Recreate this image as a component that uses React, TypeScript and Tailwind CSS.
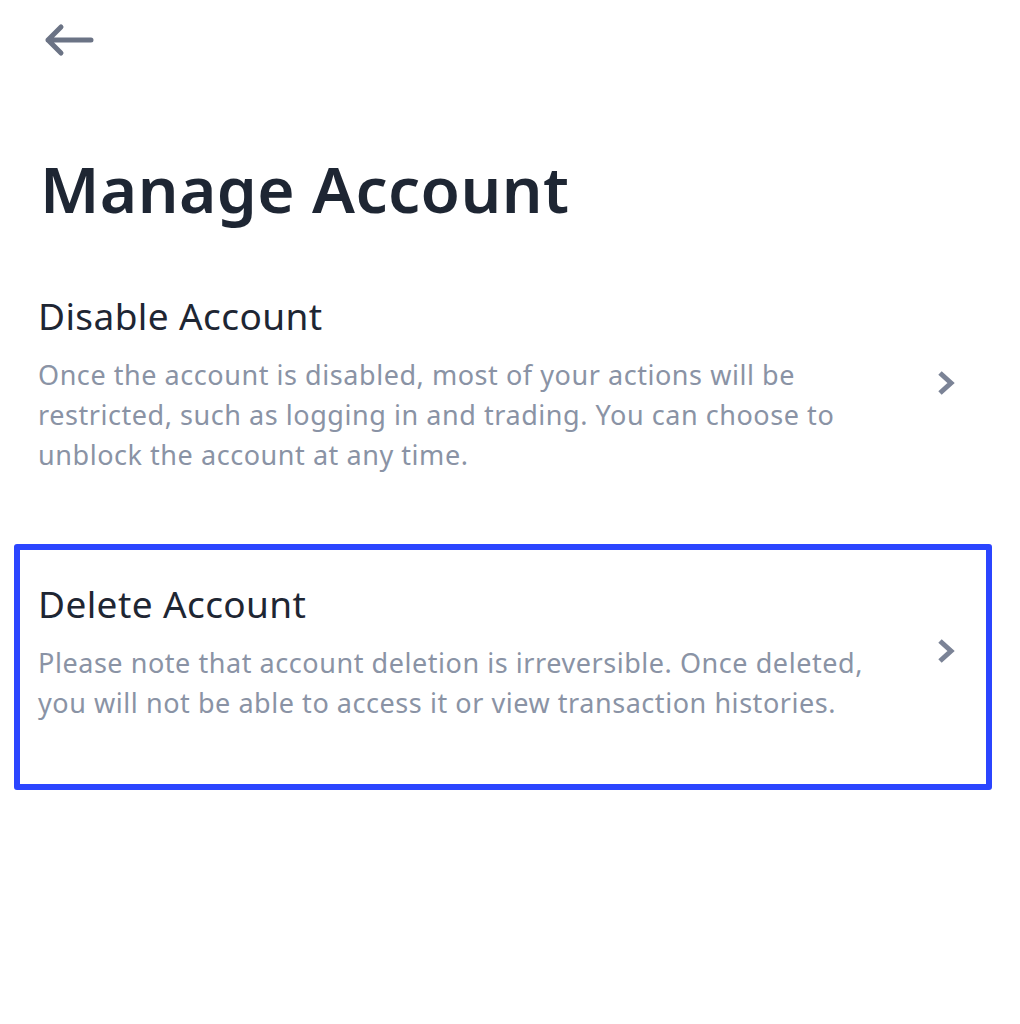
const FONT = "font-['Noto_Sans',sans-serif]";

function BackArrow() {
  return (
    <svg width="52" height="36" viewBox="0 0 52 36" fill="none" className="text-[#6b7385]">
      <path d="M5 18H48M18 5L5 18L18 31" stroke="currentColor" strokeWidth="5" strokeLinecap="round" strokeLinejoin="round" />
    </svg>
  );
}

function Chevron({ className = '' }: { className?: string }) {
  return (
    <svg width="24" height="28" viewBox="0 0 24 28" fill="none" className={`shrink-0 text-[#7b8396] ${className}`}>
      <path d="M6 4L17 14L6 24" stroke="currentColor" strokeWidth="5" strokeLinejoin="miter" />
    </svg>
  );
}

export default function App() {
  return (
    <div className={`${FONT} min-h-[1024px] w-[1020px] bg-white`}>
      <div className="pl-[43px] pt-[22px]">
        <BackArrow />
      </div>

      <h1 className="mt-[91px] pl-[40px] text-[64px] font-semibold leading-[80px] tracking-[0.4px] text-[#1e2633]">
        Manage Account
      </h1>

      <section className="mt-[61px] flex items-center justify-between pl-[38px] pr-[62px]">
        <div className="w-[830px]">
          <h2 className="text-[37px] leading-[52px] tracking-[0.4px] text-[#1e2633]">Disable Account</h2>
          <p className="mt-[13px] text-[27px] leading-[40px] tracking-[0.55px] text-[#8a93a5]">
            Once the account is disabled, most of your actions will be restricted, such as logging in and trading. You
            can choose to unblock the account at any time.
          </p>
        </div>
        <Chevron />
      </section>

      <section className="ml-[14px] mt-[69px] flex h-[246px] w-[978px] items-start justify-between rounded-[3px] border-[6px] border-[#2b45ff] pl-[18px] pr-[28px] pt-[28px]">
        <div className="w-[850px]">
          <h2 className="text-[37px] leading-[52px] tracking-[0.4px] text-[#1e2633]">Delete Account</h2>
          <p className="mt-[13px] text-[27px] leading-[40px] tracking-[0.55px] text-[#8a93a5]">
            Please note that account deletion is irreversible. Once deleted, you will not be able to access it or view
            transaction histories.
          </p>
        </div>
        <Chevron className="mt-[59px]" />
      </section>
    </div>
  );
}
